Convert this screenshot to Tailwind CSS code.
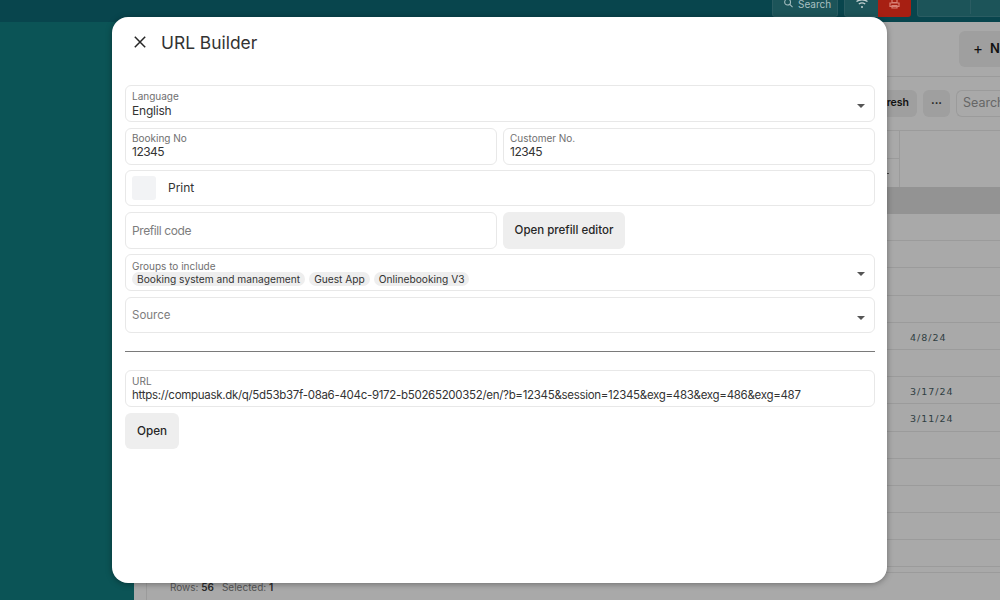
<!DOCTYPE html>
<html>
<head>
<meta charset="utf-8">
<script src="https://cdn.jsdelivr.net/npm/@tailwindcss/browser@4"></script>
</head>
<body class="w-[1000px] h-[600px] overflow-hidden bg-[#a9a9a9] font-['Inter',sans-serif]">
<div class="relative w-[1000px] h-[600px] overflow-hidden flex flex-col">
  <!-- top bar -->
  <div class="h-[22px] shrink-0 bg-[#08454d] flex justify-end items-start overflow-hidden">
    <div class="flex items-start gap-[4px] pl-[10px] w-[66px] h-[17px] mr-[6px] border border-t-0 border-[#2a5c62] rounded-b-[3px] bg-[#1c5459] text-[10px] leading-[9px] text-[#a9c0c2]">
      <svg class="w-[11px] h-[11px] -mt-[2px]" viewBox="0 0 12 12" fill="none" stroke="#a9c0c2" stroke-width="1.1"><circle cx="5" cy="4.5" r="3.200"/><path d="M7.400 7l3 3"/></svg>
      <span>Search</span>
    </div>
    <div class="flex justify-center w-[34px] h-[17px] border border-t-0 border-r-0 border-[#2a5c62] bg-[#1c5459] rounded-bl-[3px]">
      <svg class="w-[14px] h-[9px]" viewBox="0 0 14 9" fill="none" stroke="#c4d2d3" stroke-width="1.200"><path d="M1.500 1.500c3-2.300 8-2.300 11 0M3.800 4c2-1.500 4.400-1.500 6.400 0"/><circle cx="7" cy="7" r="1" fill="#c4d2d3" stroke="none"/></svg>
    </div>
    <div class="flex justify-center w-[33px] h-[17px] bg-[#a71f12] rounded-br-[3px] mr-[6px]">
      <svg class="w-[11px] h-[9px]" viewBox="0 0 11 9" fill="none" stroke="#d98075" stroke-width="1.200"><path d="M3 0v2.500h5V0M1 3h9v3.500H1zM3 5.500h5V8H3z"/></svg>
    </div>
    <div class="flex w-[83px] h-[17px] border border-t-0 border-r-0 border-[#2a5c62] bg-[#1c5459] rounded-bl-[3px]">
      <div class="w-[53px] h-[14px] border-r border-[#2a5c62]"></div>
    </div>
  </div>
  <div class="flex-1 flex min-h-0">
    <!-- sidebar -->
    <div class="w-[134px] shrink-0 bg-[#0b5456]"></div>
    <!-- main -->
    <div class="flex-1 min-w-0 flex flex-col relative">
      <!-- header -->
      <div class="h-[55px] shrink-0 border-b border-[#9b9b9b] flex justify-end items-start pt-[9px]">
        <div class="w-[41px] h-[36px] bg-[#9f9f9f] rounded-l-[6px] flex items-center pl-[14px] gap-[7px] text-[13px] font-semibold text-[#111] overflow-hidden whitespace-nowrap">
          <span class="text-[15px] font-normal">+</span><span>New</span>
        </div>
      </div>
      <!-- toolbar -->
      <div class="h-[54px] shrink-0 border-b border-[#9b9b9b] flex justify-end items-center gap-[6px] pb-[1px]">
        <div class="w-[60px] h-[27px] bg-[#9f9f9f] rounded-[6px] flex items-center justify-end pr-[8px] text-[10.500px] font-semibold text-[#111]">Refresh</div>
        <div class="w-[27px] h-[27px] bg-[#9f9f9f] rounded-[6px] flex items-center justify-center text-[11px] font-bold leading-none text-[#111]">···</div>
        <div class="w-[44px] h-[27px] border border-[#9b9b9b] border-r-0 rounded-l-[6px] pl-[6px] flex items-center text-[12.500px] text-[#666] overflow-hidden">Search</div>
      </div>
      <!-- table header -->
      <div class="h-[56px] shrink-0 flex">
        <div class="flex-1 border-r border-[#9b9b9b] flex flex-col">
          <div class="h-[28px] border-b border-[#9b9b9b]"></div>
          <div class="flex-1 flex justify-end items-center pr-[10px]"><span class="w-[3px] h-px bg-[#444]"></span></div>
        </div>
        <div class="w-[100px]"></div>
      </div>
      <div class="h-[27px] shrink-0 bg-[#939393]"></div>
      <!-- rows -->
      <div class="flex flex-col">
        <div class="h-[27.200px] border-b border-[#9b9b9b]"></div>
        <div class="h-[27.200px] border-b border-[#9b9b9b]"></div>
        <div class="h-[27.200px] border-b border-[#9b9b9b]"></div>
        <div class="h-[27.200px] border-b border-[#9b9b9b]"></div>
        <div class="h-[27.200px] border-b border-[#9b9b9b] pt-[4px] flex items-center justify-end pr-[44px] font-['DejaVu_Sans',sans-serif] text-[9.500px] tracking-[1px] text-[#2f3e42]"><span class="w-[46px]">4/8/24</span></div>
        <div class="h-[27.200px] border-b border-[#9b9b9b]"></div>
        <div class="h-[27.200px] border-b border-[#9b9b9b] pt-[4px] flex items-center justify-end pr-[44px] font-['DejaVu_Sans',sans-serif] text-[9.500px] tracking-[1px] text-[#2f3e42]"><span class="w-[46px]">3/17/24</span></div>
        <div class="h-[27.200px] border-b border-[#9b9b9b] pt-[4px] flex items-center justify-end pr-[44px] font-['DejaVu_Sans',sans-serif] text-[9.500px] tracking-[1px] text-[#2f3e42]"><span class="w-[46px]">3/11/24</span></div>
        <div class="h-[27.200px] border-b border-[#9b9b9b]"></div>
        <div class="h-[27.200px] border-b border-[#9b9b9b]"></div>
        <div class="h-[27.200px] border-b border-[#9b9b9b]"></div>
        <div class="h-[27.200px] border-b border-[#9b9b9b]"></div>
        <div class="h-[27.200px] border-b border-[#9b9b9b]"></div>
      </div>
    </div>
  </div>
  <!-- footer -->
  <div class="absolute left-[146px] right-0 top-[572px] bottom-0 border-l border-t border-[#9b9b9b] pl-[23px] pt-[8px] text-[10px] leading-[13px] text-[#555]">
    Rows: <b class="font-semibold text-[#2a2a2a]">56</b><span class="ml-[8px]">Selected:</span> <b class="font-semibold text-[#2a2a2a]">1</b>
  </div>

  <!-- modal -->
  <div class="absolute left-[112px] top-[17px] w-[775px] h-[566px] bg-white rounded-[16px] shadow-[0_1px_6px_rgba(0,0,0,0.35)] pl-[13px] pr-[12px] flex flex-col text-[#262626]">
    <div class="h-[68px] shrink-0 flex items-start pt-[15px]">
      <svg class="ml-[9px] w-[12px] h-[12px] mt-[4px]" viewBox="0 0 12 12" fill="none" stroke="#262626" stroke-width="1.500"><path d="M.8.800l10.400 10.400M11.200.800L.8 11.200"/></svg>
      <span class="ml-[15px] text-[17.400px] leading-[21px] text-[#333]">URL Builder</span>
    </div>
    <div class="flex flex-col gap-[5.500px]">
      <!-- language -->
      <div class="h-[37px] relative border border-[#e8e8e8] rounded-[6px] pl-[6px] pt-[4px]">
        <div class="text-[10px] leading-[12px] text-[#707070]">Language</div>
        <div class="text-[12px] leading-[17px] tracking-[-0.2px] text-[#333]">English</div>
        <span class="absolute right-[9px] top-[18px] w-0 h-0 border-l-[4px] border-r-[4px] border-t-[4px] border-l-transparent border-r-transparent border-t-[#555]"></span>
      </div>
      <!-- booking / customer -->
      <div class="flex gap-[6px]">
        <div class="w-[372px] h-[37px] border border-[#e8e8e8] rounded-[6px] pl-[6px] pt-[3px]">
          <div class="text-[10px] leading-[12px] text-[#707070]">Booking No</div>
          <div class="text-[12px] leading-[15px] tracking-[-0.5px] text-[#333]">12345</div>
        </div>
        <div class="flex-1 h-[37px] border border-[#e8e8e8] rounded-[6px] pl-[6px] pt-[3px]">
          <div class="text-[10px] leading-[12px] text-[#707070]">Customer No.</div>
          <div class="text-[12px] leading-[15px] tracking-[-0.5px] text-[#333]">12345</div>
        </div>
      </div>
      <!-- print -->
      <div class="h-[36px] border border-[#e8e8e8] rounded-[6px] pl-[6px] flex items-center">
        <div class="w-[24px] h-[24px] bg-[#f2f3f5] rounded-[3px]"></div>
        <span class="ml-[12px] text-[12px] text-[#333]">Print</span>
      </div>
      <!-- prefill -->
      <div class="flex gap-[6px]">
        <div class="w-[372px] h-[37px] border border-[#e8e8e8] rounded-[6px] pl-[6px] pt-[1px] flex items-center text-[12px] tracking-[-0.4px] text-[#7d7d7d]">Prefill code</div>
        <div class="w-[122px] h-[37px] bg-[#eeeeee] rounded-[6px] pt-[1px] flex items-center justify-center text-[11.500px] font-medium text-[#262626]">Open prefill editor</div>
      </div>
      <!-- groups -->
      <div class="h-[37px] relative border border-[#e8e8e8] rounded-[6px] pl-[6px] pt-[5px]">
        <div class="text-[10px] leading-[12px] text-[#707070]">Groups to include</div>
        <div class="flex gap-[4px]">
          <span class="h-[14px] px-[5px] rounded-full bg-[#eeeeee] text-[10.200px] leading-[14px] text-[#333]">Booking system and management</span>
          <span class="h-[14px] px-[5px] rounded-full bg-[#eeeeee] text-[10.200px] leading-[14px] text-[#333]">Guest App</span>
          <span class="h-[14px] px-[5px] rounded-full bg-[#eeeeee] text-[10.200px] leading-[14px] text-[#333]">Onlinebooking V3</span>
        </div>
        <span class="absolute right-[9px] top-[17px] w-0 h-0 border-l-[4px] border-r-[4px] border-t-[4px] border-l-transparent border-r-transparent border-t-[#555]"></span>
      </div>
      <!-- source -->
      <div class="h-[36px] relative border border-[#e8e8e8] rounded-[6px] pl-[6px] pt-[2px] flex items-center text-[11.500px] text-[#7d7d7d]">
        Source
        <span class="absolute right-[9px] top-[18px] w-0 h-0 border-l-[4px] border-r-[4px] border-t-[4px] border-l-transparent border-r-transparent border-t-[#555]"></span>
      </div>
    </div>
    <div class="h-px bg-[#7a7a7a] mt-[18px] shrink-0"></div>
    <div class="h-[37px] mt-[18px] border border-[#e8e8e8] rounded-[6px] pl-[6px] pt-[4px] shrink-0">
      <div class="text-[10px] leading-[12px] text-[#707070]">URL</div>
      <div class="text-[11.500px] leading-[16px] tracking-[-0.3px] text-[#333] whitespace-nowrap">https://compuask.dk/q/5d53b37f-08a6-404c-9172-b50265200352/en/?b=12345&amp;session=12345&amp;exg=483&amp;exg=486&amp;exg=487</div>
    </div>
    <div class="w-[54px] h-[36px] mt-[6px] pt-[2px] bg-[#eeeeee] rounded-[6px] flex items-center justify-center text-[11.700px] font-medium text-[#262626]">Open</div>
  </div>
</div>
</body>
</html>
